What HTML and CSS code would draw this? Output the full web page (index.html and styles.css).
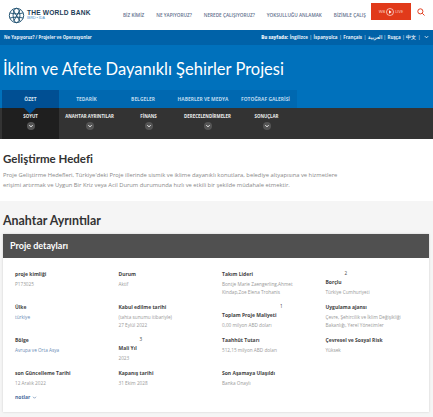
FILE: index.html
```html
<!DOCTYPE html>
<html lang="tr">
<head>
    <meta charset="UTF-8">
    <meta name="viewport" content="width=device-width, initial-scale=1.0">
    <title>İklim ve Afete Dayanıklı Şehirler Projesi</title>
    <link rel="stylesheet" href="styles.css">
</head>
<body>
    <header class="top">
        <div class="logo">
            <svg class="globe" viewBox="0 0 18 18" fill="none" stroke="#1d4f6e" stroke-width="1">
                <circle cx="9" cy="9" r="7.6"/>
                <ellipse cx="9" cy="9" rx="3.6" ry="7.6"/>
                <path d="M2 6.2c3 1.4 11 1.4 14 0M2 11.8c3-1.4 11-1.4 14 0M5 2.5l8 13M13 2.5 6 15"/>
            </svg>
            <div>
                <div class="logo-name">THE WORLD BANK</div>
                <div class="logo-sub">IBRD • IDA</div>
            </div>
        </div>
        <nav class="main-nav">
            <a>BİZ KİMİZ</a>
            <a>NE YAPIYORUZ?</a>
            <a>NEREDE ÇALIŞIYORUZ?</a>
            <a>YOKSULLUĞU ANLAMAK</a>
            <a>BİZİMLE ÇALIŞ</a>
        </nav>
        <div class="live">
            <span>WB</span>
            <svg viewBox="0 0 10 10" class="live-icon"><circle cx="5" cy="5" r="4.4" fill="none" stroke="#fff" stroke-width=".8"/><path d="M3.8 2.8 7 5 3.8 7.2z" fill="#fff"/></svg>
            <span>LIVE</span>
        </div>
        <svg class="search" viewBox="0 0 10 10" fill="none" stroke="#e13a1a" stroke-width="1.2"><circle cx="4.2" cy="4.2" r="3.2"/><path d="m6.6 6.6 2.8 2.8"/></svg>
    </header>

    <div class="crumbs">
        <div class="crumb-path">Ne Yapıyoruz? / Projeler ve Operasyonlar</div>
        <div class="langs">
            <b>Bu sayfada:</b>
            <span>İngilizce</span><i>|</i>
            <span>İspanyolca</span><i>|</i>
            <span>Français</span><i>|</i>
            <span>العربية</span><i>|</i>
            <span>Ruşça</span><i>|</i>
            <span>中文</span><i>|</i>
            <svg class="lang-arrow" viewBox="0 0 6 4" fill="none" stroke="#fff" stroke-width="1"><path d="m1 1 2 2 2-2"/></svg>
        </div>
    </div>

    <section class="hero">
        <h1>İklim ve Afete Dayanıklı Şehirler Projesi</h1>
        <div class="tabs">
            <a class="tab active">ÖZET</a>
            <a class="tab">TEDARİK</a>
            <a class="tab">BELGELER</a>
            <a class="tab">HABERLER VE MEDYA</a>
            <a class="tab">FOTOĞRAF GALERİSİ</a>
        </div>
    </section>

    <div class="subnav">
        <div class="sub active"><span>SOYUT</span><svg class="sub-ico" viewBox="0 0 8 8"><circle cx="4" cy="4" r="4" fill="#555"/><path d="m2.4 3.2 1.6 1.6 1.6-1.6" fill="none" stroke="#fff"/></svg></div>
        <div class="sub"><span>ANAHTAR AYRINTILAR</span><svg class="sub-ico" viewBox="0 0 8 8"><circle cx="4" cy="4" r="4" fill="#555"/><path d="m2.4 3.2 1.6 1.6 1.6-1.6" fill="none" stroke="#fff"/></svg></div>
        <div class="sub"><span>FİNANS</span><svg class="sub-ico" viewBox="0 0 8 8"><circle cx="4" cy="4" r="4" fill="#555"/><path d="m2.4 3.2 1.6 1.6 1.6-1.6" fill="none" stroke="#fff"/></svg></div>
        <div class="sub"><span>DERECELENDİRMELER</span><svg class="sub-ico" viewBox="0 0 8 8"><circle cx="4" cy="4" r="4" fill="#555"/><path d="m2.4 3.2 1.6 1.6 1.6-1.6" fill="none" stroke="#fff"/></svg></div>
        <div class="sub"><span>SONUÇLAR</span><svg class="sub-ico" viewBox="0 0 8 8"><circle cx="4" cy="4" r="4" fill="#555"/><path d="m2.4 3.2 1.6 1.6 1.6-1.6" fill="none" stroke="#fff"/></svg></div>
    </div>

    <section class="goal">
        <h2>Geliştirme Hedefi</h2>
        <p>Proje Geliştirme Hedefleri, Türkiye'deki Proje illerinde sismik ve iklime dayanıklı konutlara, belediye altyapısına ve hizmetlere erişimi artırmak ve Uygun Bir Kriz veya Acil Durum durumunda hızlı ve etkili bir şekilde müdahale etmektir.</p>
    </section>

    <section class="details">
        <h2>Anahtar Ayrıntılar</h2>
        <div class="panel">
            <h3>Proje detayları</h3>
            <div class="grid">
                <div class="item"><b>proje kimliği</b><p>P173025</p></div>
                <div class="item"><b>Durum</b><p>Aktif</p></div>
                <div class="item"><b>Takım Lideri</b><p>Bontje Marie Zaengerling,Ahmet Kindap,Zoe Elena Trohanis</p></div>
                <div class="item"><div class="mark mark-2">2</div><b>Borçlu</b><p>Türkiye Cumhuriyeti</p></div>

                <div class="item"><b>Ülke</b><p class="link">türkiye</p></div>
                <div class="item"><b>Kabul edilme tarihi</b><p>(tahta sunumu itibariyle)<br>27 Eylül 2022</p></div>
                <div class="item"><div class="mark mark-1">1</div><b>Toplam Proje Maliyeti</b><p>0,00 milyon ABD doları</p></div>
                <div class="item"><b>Uygulama ajansı</b><p>Çevre, Şehircilik ve İklim Değişikliği Bakanlığı, Yerel Yönetimler</p></div>

                <div class="item"><b>Bölge</b><p class="link">Avrupa ve Orta Asya</p></div>
                <div class="item"><div class="mark mark-3">3</div><b>Mali Yıl</b><p>2023</p></div>
                <div class="item"><b>Taahhüt Tutarı</b><p>512,15 milyon ABD doları</p></div>
                <div class="item"><b>Çevresel ve Sosyal Risk</b><p>Yüksek</p></div>

                <div class="item"><b>son Güncelleme Tarihi</b><p>12 Aralık 2022</p></div>
                <div class="item"><b>Kapanış tarihi</b><p>31 Ekim 2028</p></div>
                <div class="item"><b>Son Aşamaya Ulaşıldı</b><p>Banka Onaylı</p></div>
            </div>
            <a class="notes">notlar <svg viewBox="0 0 6 4" fill="none" stroke="#4a6d9c" stroke-width=".8"><path d="m1 1 2 2 2-2"/></svg></a>
        </div>
    </section>
</body>
</html>
```

FILE: styles.css
```css
* {
    box-sizing: border-box;
}
html, body {
    height: 417px;
    overflow: hidden;
}
body {
    margin: 0;
    font-family: "Open Sans", sans-serif;
    background: #f5f5f5;
    color: #333;
}
h1, h2, h3, p {
    margin: 0;
}

/* top bar */
.top {
    height: 30px;
    background: #fff;
    display: flex;
    align-items: center;
    padding-left: 8px;
}
.logo {
    display: flex;
    align-items: center;
    gap: 2px;
    width: 115px;
}
.globe {
    width: 17px;
    height: 17px;
}
.logo-name {
    font: bold 6.6px/7px "Liberation Sans", sans-serif;
    letter-spacing: .2px;
    color: #1c3d57;
}
.logo-sub {
    font: 3.6px/5px "Liberation Sans", sans-serif;
    color: #4a90c8;
}
.main-nav {
    display: flex;
    gap: 12px;
    width: 248px;
    font-size: 4.7px;
    font-weight: 600;
    color: #5f6f8c;
    white-space: nowrap;
}
.live {
    width: 40px;
    height: 17px;
    margin-top: -7px;
    background: #e13a1a;
    color: #f5b9a8;
    font-size: 4px;
    font-weight: 600;
    display: flex;
    align-items: center;
    justify-content: center;
    gap: 1px;
}
.live-icon {
    width: 8px;
    height: 8px;
}
.search {
    width: 8px;
    height: 8px;
    margin: -7px 0 0 6px;
}

/* breadcrumb */
.crumbs {
    height: 15px;
    background: #0062a8;
    color: #e6f0f8;
    display: flex;
    align-items: center;
    justify-content: space-between;
    padding: 0 4px 1px 4px;
    font-size: 4.5px;
    font-weight: 700;
    white-space: nowrap;
}
.crumb-path {
    font-size: 4.3px;
}
.langs {
    display: flex;
    align-items: center;
    gap: 1.6px;
}
.langs i {
    font-style: normal;
    font-weight: 400;
}
.lang-arrow {
    width: 5px;
    height: 4px;
    margin-left: 2px;
}

/* title and tabs */
.hero {
    background: #0071bc;
    height: 63px;
    display: flex;
    flex-direction: column;
    justify-content: space-between;
}
.hero h1 {
    font: 400 16.5px/24px Lato, sans-serif;
    color: #fff;
    padding: 12px 0 0 3px;
}
.tabs {
    display: flex;
    width: 295px;
    height: 18px;
    margin-left: 2px;
    background: #0068b0;
}
.tab {
    flex: none;
    width: 57px;
    text-align: center;
    font-size: 4.9px;
    font-weight: 700;
    line-height: 18px;
    color: #bcd8ee;
    white-space: nowrap;
}
.tab.active {
    background: #004f93;
    color: #d7e6f3;
}
.tab:nth-child(2) {
    width: 55px;
}
.tab:nth-child(3) {
    width: 58px;
}
.tab:nth-child(4) {
    width: 62px;
}
.tab:nth-child(5) {
    width: 63px;
}

/* dark sub navigation */
.subnav {
    height: 31px;
    background: #333;
    display: flex;
    gap: 2px;
    padding-left: 2px;
}
.sub {
    width: 57px;
    padding-top: 5px;
    display: flex;
    flex-direction: column;
    align-items: center;
    gap: 3px;
    font-size: 4.4px;
    font-weight: 700;
    line-height: 6px;
    color: #eee;
    white-space: nowrap;
}
.sub.active {
    background: #1f1f1f;
    position: relative;
}
.sub.active::before {
    content: "";
    position: absolute;
    top: 0;
    left: 22px;
    border: 6px solid transparent;
    border-top-color: #004f93;
    border-bottom: 0;
}
.sub-ico {
    width: 8px;
    height: 8px;
}

/* goal */
.goal {
    background: #fff;
    height: 62px;
    padding: 13px 82px 0 3px;
}
.goal h2, .details h2 {
    font-family: Lato, sans-serif;
    font-weight: 700;
    color: #333;
}
.goal h2 {
    font-size: 11.5px;
    line-height: 13px;
}
.goal p {
    font-size: 5.8px;
    line-height: 9.5px;
    color: #888;
    margin-top: 6px;
}

/* key details */
.details {
    padding: 12px 4px 0 3px;
}
.details h2 {
    font-size: 12.4px;
    line-height: 15px;
    margin-bottom: 6px;
}
.panel {
    background: #fff;
    height: 178px;
    box-shadow: 0 0 2px #ccc;
}
.panel h3 {
    height: 24px;
    background: #505050;
    color: #fff;
    font: 700 9px/24px Lato, sans-serif;
    padding-left: 7px;
}
.grid {
    display: grid;
    grid-template-columns: 103.5px 103.5px 103.5px 1fr;
    grid-auto-rows: 33px;
    padding: 12px 0 0 12px;
}
.item b {
    display: block;
    font-size: 5px;
    font-weight: 700;
    line-height: 8px;
    color: #444;
}
.item p {
    font-size: 4.7px;
    line-height: 8px;
    color: #999;
    margin-top: 2px;
    padding-right: 20px;
}
.item p.link {
    color: #6a8bb5;
}
.mark {
    font-size: 4.6px;
    line-height: 9px;
    margin-top: -1px;
    color: #444;
}
.mark-1 {
    margin-left: 58px;
}
.mark-2 {
    margin-left: 19px;
}
.mark-3 {
    margin-left: 21px;
}
.notes {
    display: block;
    font-size: 5px;
    font-weight: 700;
    color: #4a6d9c;
    padding: 0 0 0 12px;
    margin-top: -8px;
}
.notes svg {
    width: 5px;
    height: 3px;
}
```
